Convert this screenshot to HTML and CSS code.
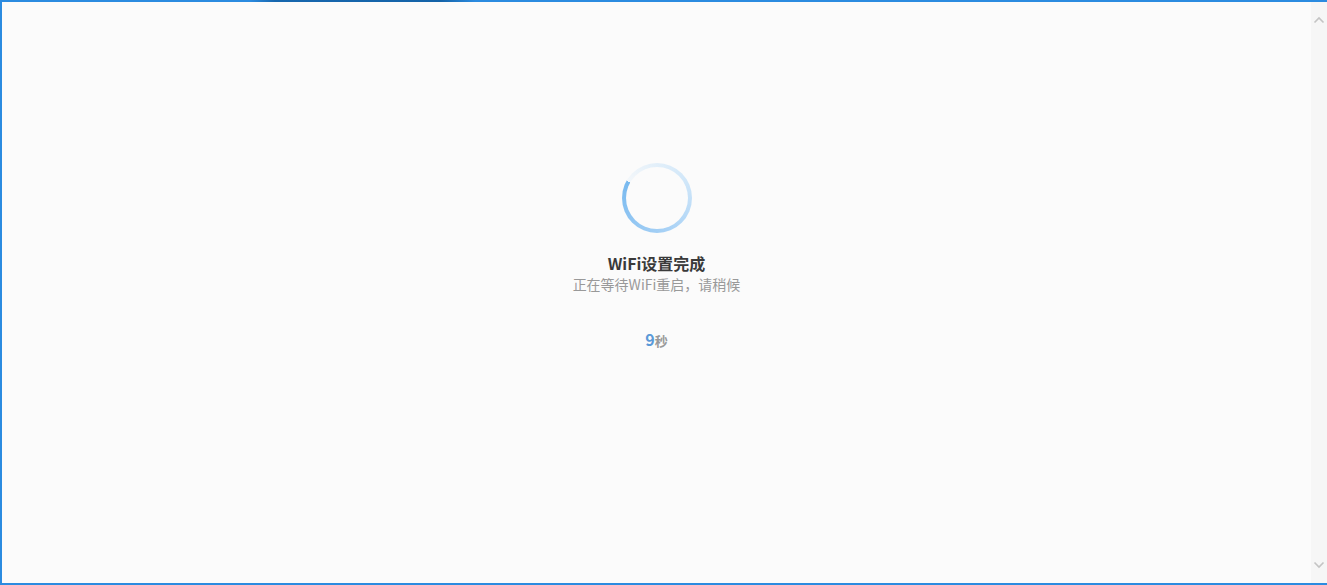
FILE: index.html
```html
<!DOCTYPE html>
<html lang="zh-CN">
<head>
<meta charset="utf-8">
<title>WiFi设置完成</title>
<link rel="stylesheet" href="styles.css">
</head>
<body>
<div class="frame">
  <div class="topline"></div>
  <div class="body-row">
    <main class="content">
      <div class="spinner"></div>
      <h1 class="title">WiFi设置完成</h1>
      <p class="subtitle">正在等待WiFi重启，请稍候</p>
      <p class="countdown"><span class="num">9</span><span class="unit">秒</span></p>
    </main>
    <aside class="scrollbar">
      <svg class="arrow" width="12" height="8" viewBox="0 0 12 8"><path d="M1.5 6.5 L6 2 L10.5 6.5" fill="none" stroke="#c4c4c4" stroke-width="1.6"/></svg>
      <svg class="arrow" width="12" height="8" viewBox="0 0 12 8"><path d="M1.5 1.5 L6 6 L10.5 1.5" fill="none" stroke="#c4c4c4" stroke-width="1.6"/></svg>
    </aside>
  </div>
</div>
</body>
</html>
```
FILE: styles.css
```css
html, body {
  margin: 0;
  padding: 0;
  height: 100%;
  background: #fbfbfb;
  font-family: "Microsoft YaHei", "Noto Sans CJK SC", "Noto Sans", sans-serif;
}
.frame {
  box-sizing: border-box;
  height: 585px;
  display: flex;
  flex-direction: column;
  border-left: 2px solid #2b8be0;
  border-bottom: 2px solid #2b8be0;
}
.topline {
  height: 2px;
  flex: none;
  margin-left: -2px;
  background: linear-gradient(to right, #2b8be0 0, #2b8be0 250px, #1767ae 275px, #1463a8 440px, #2b8be0 475px, #2b8be0 100%);
}
.body-row {
  flex: 1;
  display: flex;
  min-height: 0;
}
.content {
  flex: 1;
  display: flex;
  flex-direction: column;
  align-items: center;
  padding-top: 161px;
}
.spinner {
  width: 70px;
  height: 70px;
  border-radius: 50%;
  position: relative;
  background: conic-gradient(from 300deg, rgba(200, 225, 245, 0.15) 0deg, rgba(190, 222, 248, 0.7) 120deg, #a9d2f6 220deg, #78b9ef 360deg);
}
.spinner::after {
  content: "";
  position: absolute;
  inset: 4px;
  border-radius: 50%;
  background: #fbfbfb;
}
.title {
  margin: 20px 0 0;
  font-size: 16px;
  line-height: 20px;
  font-weight: bold;
  color: #3a3a3a;
}
.subtitle {
  margin: 1px 0 0;
  font-size: 14px;
  line-height: 20px;
  color: #999999;
}
.countdown {
  margin: 34px 0 0;
  line-height: 22px;
  font-weight: bold;
}
.num {
  font-size: 16px;
  color: #5b9ad8;
}
.unit {
  font-size: 13px;
  color: #999999;
}
.scrollbar {
  width: 16px;
  flex: none;
  background: #f6f6f6;
  display: flex;
  flex-direction: column;
  justify-content: space-between;
  align-items: center;
  padding: 14px 0 14px;
}
.arrow {
  display: block;
}
```
